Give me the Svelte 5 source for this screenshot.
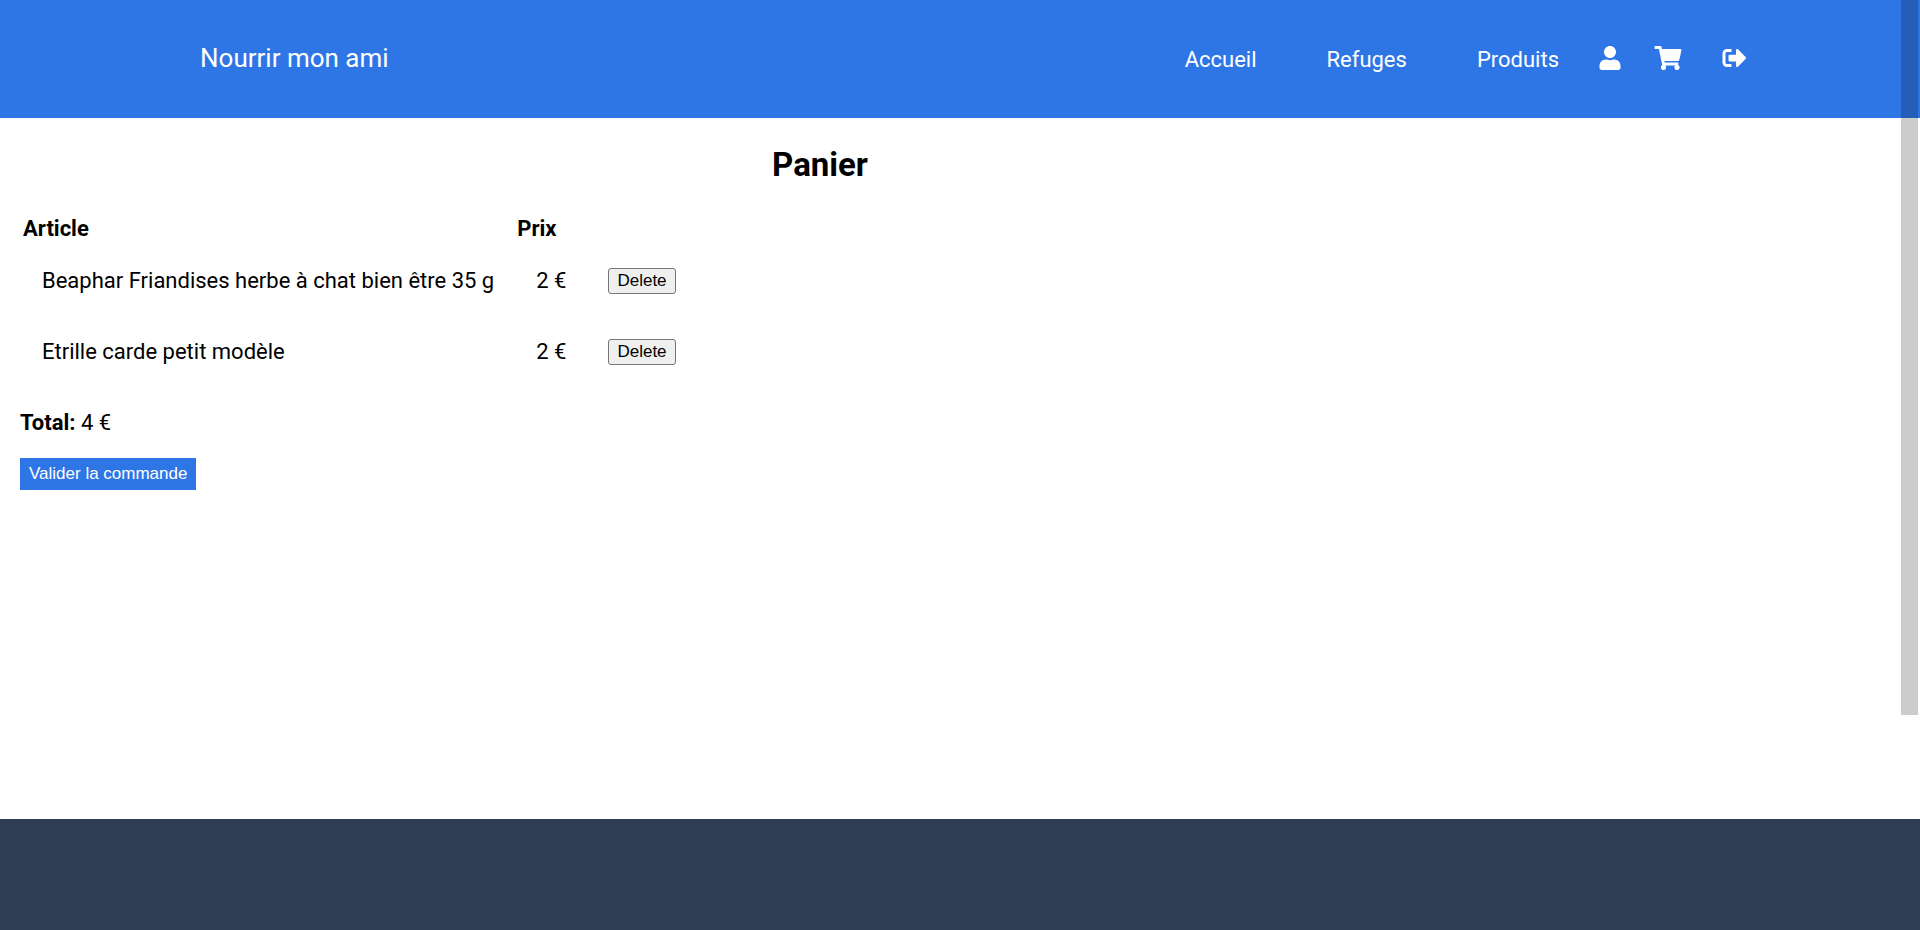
<script>
  let items = $state([
    { id: 1, name: 'Beaphar Friandises herbe à chat bien être 35 g', price: 2 },
    { id: 2, name: 'Etrille carde petit modèle', price: 2 }
  ]);
  let total = $derived(items.reduce((sum, item) => sum + item.price, 0));

  const links = ['Accueil', 'Refuges', 'Produits'];

  function remove(id) {
    items = items.filter((item) => item.id !== id);
  }
</script>

<div class="page">
  <header>
    <a class="brand" href="#accueil">Nourrir mon ami</a>
    <nav aria-label="Navigation principale">
      <div class="links">
        {#each links as link}
          <a href="#{link.toLowerCase()}">{link}</a>
        {/each}
      </div>
      <a class="icon user" href="#compte" aria-label="Compte">
        <svg viewBox="0 0 448 512" width="22" height="24" aria-hidden="true"><path d="M224 256c70.7 0 128-57.3 128-128S294.7 0 224 0 96 57.3 96 128s57.3 128 128 128zm89.6 32h-16.7c-22.2 10.2-46.9 16-72.9 16s-50.6-5.8-72.9-16h-16.7C60.2 288 0 348.2 0 422.4V464c0 26.5 21.5 48 48 48h352c26.5 0 48-21.5 48-48v-41.6c0-74.2-60.2-134.4-134.4-134.4z" /></svg>
      </a>
      <a class="icon cart" href="#panier" aria-label="Panier">
        <svg viewBox="0 0 576 512" width="28" height="24" aria-hidden="true"><path d="M528.12 301.319l47.273-208C578.806 78.301 567.391 64 551.99 64H159.208l-9.166-44.81C147.758 8.021 137.93 0 126.529 0H24C10.745 0 0 10.745 0 24v16c0 13.255 10.745 24 24 24h69.883l70.248 343.435C147.325 417.1 136 435.222 136 456c0 30.928 25.072 56 56 56s56-25.072 56-56c0-15.674-6.447-29.835-16.824-40h209.647C430.447 426.165 424 440.326 424 456c0 30.928 25.072 56 56 56s56-25.072 56-56c0-22.172-12.888-41.332-31.579-50.405l5.517-24.276c3.413-15.018-8.002-29.319-23.403-29.319H218.117l-6.545-32h293.145c11.206 0 20.92-7.754 23.403-18.681z" /></svg>
      </a>
      <a class="icon logout" href="#deconnexion" aria-label="Déconnexion">
        <svg viewBox="0 0 512 512" width="25" height="24" aria-hidden="true"><path d="M497 273L329 441c-15 15-41 4.5-41-17v-96H152c-13.3 0-24-10.7-24-24v-96c0-13.3 10.7-24 24-24h136V88c0-21.4 25.9-32 41-17l168 168c9.3 9.4 9.3 24.6 0 34zM192 436v-40c0-6.6-5.4-12-12-12H96c-17.7 0-32-14.3-32-32V160c0-17.7 14.3-32 32-32h84c6.6 0 12-5.4 12-12V76c0-6.6-5.4-12-12-12H96c-53 0-96 43-96 96v192c0 53 43 96 96 96h84c6.6 0 12-5.4 12-12z" /></svg>
      </a>
    </nav>
  </header>

  <main>
    <h1>Panier</h1>
    <table>
      <thead>
        <tr>
          <th scope="col">Article</th>
          <th scope="col">Prix</th>
        </tr>
      </thead>
      <tbody>
        {#each items as item (item.id)}
          <tr>
            <td>{item.name}</td>
            <td>{item.price} €</td>
            <td><button class="delete" type="button" onclick={() => remove(item.id)}>Delete</button></td>
          </tr>
        {/each}
      </tbody>
    </table>
    <p><strong>Total:</strong> {total} €</p>
    <button class="order" type="button">Valider la commande</button>
  </main>

  <footer></footer>
  <div class="scrollbar" aria-hidden="true"></div>
</div>

<style>
  :global(body) {
    margin: 0;
  }
  .page {
    position: relative;
    display: flex;
    flex-direction: column;
    min-height: 100vh;
    background: #fff;
    color: #000;
    font: 400 22px/28px Roboto, sans-serif;
  }
  header {
    display: flex;
    align-items: baseline;
    justify-content: space-between;
    box-sizing: border-box;
    min-height: 118px;
    padding: 43px 173px 43px 200px;
    background: #2e76e5;
  }
  header a {
    color: #fff;
    text-decoration: none;
  }
  .brand {
    font-size: 26px;
    line-height: 30px;
  }
  nav,
  .links {
    display: flex;
    align-items: center;
  }
  .links {
    gap: 70px;
  }
  .icon {
    display: flex;
    padding-bottom: 4px;
  }
  .icon svg {
    fill: #fff;
  }
  .user {
    margin-left: 40px;
  }
  .cart {
    margin-left: 33px;
  }
  .logout {
    margin-left: 40px;
  }
  main {
    flex: 1;
    padding: 25px 20px;
  }
  h1 {
    max-width: 1600px;
    margin: 0 0 25px;
    font-size: 33px;
    line-height: 44px;
    font-weight: 700;
    text-align: center;
  }
  table {
    border-spacing: 2px;
  }
  th {
    padding: 1px;
    font-weight: 700;
    text-align: left;
  }
  td {
    padding: 20px;
    line-height: 29px;
  }
  tbody {
    font-weight: 400;
  }
  p {
    margin: 21px 0;
  }
  strong {
    font-weight: 700;
  }
  button {
    font: 400 17px/20px "Liberation Sans", Arial, sans-serif;
    cursor: pointer;
  }
  .delete {
    display: block;
    padding: 2px 8px;
    border: 1px solid #767676;
    border-radius: 3px;
    background: #efefef;
    color: #000;
  }
  .order {
    padding: 6px 9px;
    border: 0;
    background: #2e76e5;
    color: #fff;
  }
  footer {
    height: 111px;
    background: #2f3d54;
  }
  .scrollbar {
    position: absolute;
    top: 0;
    right: 2px;
    width: 17px;
    height: 715px;
    background: rgba(0, 0, 0, 0.2);
  }
</style>
